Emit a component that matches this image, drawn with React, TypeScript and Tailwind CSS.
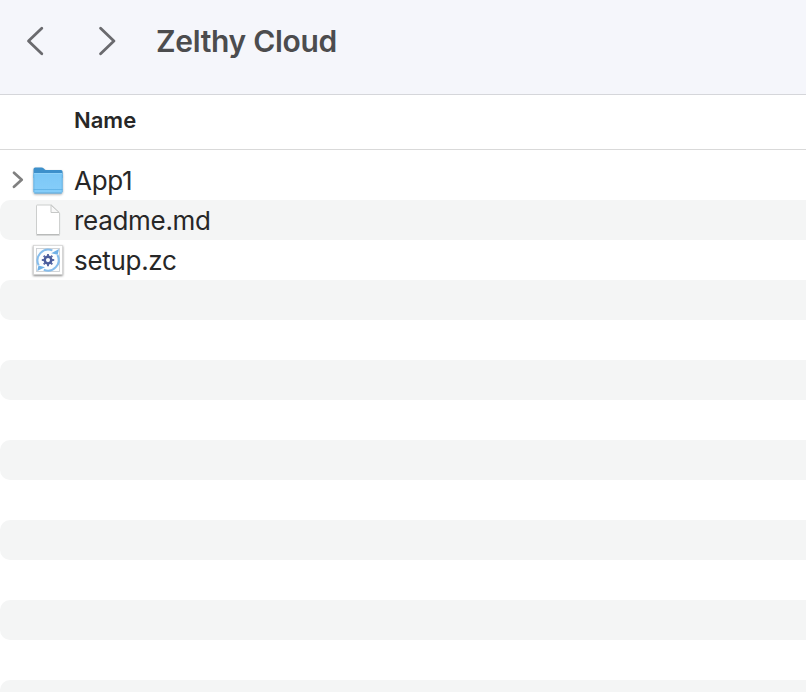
import type { ReactNode } from "react";

function Chevron({ direction }: { direction: "left" | "right" }) {
  return (
    <svg width="18" height="30" viewBox="0 0 18 30" fill="none" stroke="#6a6a6e" strokeWidth="2.8" strokeLinecap="round" strokeLinejoin="round">
      <path d={direction === "left" ? "M15.8 2.2 L2.5 15 L15.8 27.8" : "M1.6 2.2 L14.9 15 L1.6 27.8"} />
    </svg>
  );
}

function FolderIcon() {
  return (
    <svg width="34" height="34" viewBox="0 0 34 34" className="drop-shadow-[0_1px_1px_rgba(0,0,0,0.3)]">
      <defs>
        <linearGradient id="folder" x1="0" y1="0" x2="0" y2="1">
          <stop offset="0" stopColor="#7cc8f7" />
          <stop offset="1" stopColor="#86cdf9" />
        </linearGradient>
      </defs>
      <path d="M2.5 6.2 Q2.5 4.6 4.2 4.6 H10.5 Q11.8 4.6 12.8 5.5 L13.8 6.4 Q14.6 7.1 15.6 7.1 H30 Q31.6 7.1 31.6 8.7 V15 H2.5 Z" fill="#3d90cb" />
      <path d="M2.5 11.3 Q2.5 10 3.8 10 H30.3 Q31.6 10 31.6 11.3 V28.8 Q31.6 30.4 30 30.4 H4.1 Q2.5 30.4 2.5 28.8 Z" fill="url(#folder)" />
      <path d="M3.2 10.5 H31" stroke="#90d2f9" />
      <path d="M2.5 26.5 H31.6" stroke="#60b2e7" strokeWidth="0.9" />
      <path d="M3.3 30 H30.8" stroke="#559fcf" strokeWidth="0.8" />
      <path d="M2.9 11.5 V29 M31.2 11.5 V29" stroke="#5dacdf" strokeWidth="0.7" />
    </svg>
  );
}

function DocumentIcon() {
  return (
    <svg width="34" height="34" viewBox="0 0 34 34" className="drop-shadow-[0_1px_0.5px_rgba(0,0,0,0.12)]">
      <path d="M6 2 H20.5 L28.6 10 V31.1 Q28.6 31.5 28.2 31.5 H6 Q5.5 31.5 5.5 31.1 V2.5 Q5.5 2 6 2 Z" fill="#fff" stroke="#cccecd" />
      <path d="M20 2.2 V9.5 H28.2 Z" fill="#f8f8f8" stroke="#c6c8c7" strokeLinejoin="round" />
      <path d="M6 31.5 H28" stroke="#b9bbba" />
    </svg>
  );
}

function SetupIcon() {
  return (
    <svg width="34" height="34" viewBox="0 0 34 34" fill="none" className="drop-shadow-[0_1px_0.8px_rgba(0,0,0,0.5)]">
      <rect x="2.5" y="2.5" width="29" height="29" fill="#fff" stroke="#d4d4d4" strokeWidth="0.7" />
      <rect x="5.5" y="5.5" width="23" height="23" fill="#fcfdfe" stroke="#cdd0d3" strokeWidth="0.9" />
      <path d="M7.7 22.3 A10.8 10.8 0 0 1 21.4 7.4" stroke="#86bdec" strokeWidth="2.1" />
      <path d="M26.5 11.9 A10.8 10.8 0 0 1 12.8 26.8" stroke="#86bdec" strokeWidth="2.1" />
      <path d="M20.2 10.2 L28 6 L26.7 11.7 Z" fill="#70b0e6" />
      <path d="M14 24.2 L6.2 28 L7.5 22.5 Z" fill="#70b0e6" />
      <g stroke="#5c6ca7" strokeWidth="2">
        <path d="M17 10.9 V13.7 M17 20.5 V23.3 M10.8 17.1 H13.6 M20.4 17.1 H23.2 M12.7 12.8 L14.8 14.9 M19.2 19.3 L21.3 21.4 M21.3 12.8 L19.2 14.9 M14.8 19.3 L12.7 21.4" />
        <circle cx="17" cy="17.1" r="3.3" stroke="#4b5c9c" strokeWidth="2.5" />
      </g>
    </svg>
  );
}

interface FileEntry {
  name: string;
  icon: ReactNode;
  expandable?: boolean;
}

const files: FileEntry[] = [
  { name: "App1", icon: <FolderIcon />, expandable: true },
  { name: "readme.md", icon: <DocumentIcon /> },
  { name: "setup.zc", icon: <SetupIcon /> },
];

const rows: (FileEntry | undefined)[] = Array.from({ length: 14 }, (_, i) => files[i]);

export default function App() {
  return (
    <div className="flex h-[692px] w-[806px] flex-col overflow-hidden bg-white font-['Inter',sans-serif]">
      <header className="flex h-[95px] shrink-0 items-start border-b border-[#d5d6da] bg-[#f5f6fb] pl-[26px] pt-[26px]">
        <nav className="flex gap-[55px]">
          <button aria-label="Back"><Chevron direction="left" /></button>
          <button aria-label="Forward"><Chevron direction="right" /></button>
        </nav>
        <h1 className="ml-[39px] text-[30px] font-semibold leading-[30px] tracking-[-0.3px] text-[#4c4c4e]">Zelthy Cloud</h1>
      </header>
      <div className="flex h-[55px] shrink-0 items-center border-b border-[#d9d9d9] pb-1 pl-[74px] text-[22px] font-semibold text-[#272727]">
        <span>Name</span>
      </div>
      <main className="flex-1 overflow-hidden pt-2.5">
        {rows.map((file, index) => (
          <div key={index} className="flex h-10 items-center rounded-l-[10px] pl-[11px] even:bg-[#f4f5f5]">
            {file && (
              <>
                <span className="flex w-5 shrink-0">
                  {file.expandable && (
                    <svg width="14" height="18" viewBox="0 0 14 18" fill="none" stroke="#808080" strokeWidth="2.7" strokeLinecap="round" strokeLinejoin="round">
                      <path d="M3 1.8 L10.7 8.8 L3 15.8" />
                    </svg>
                  )}
                </span>
                {file.icon}
                <span className="ml-[9px] pt-0.5 text-[26px] leading-8 tracking-[-0.3px] text-[#272727]">{file.name}</span>
              </>
            )}
          </div>
        ))}
      </main>
    </div>
  );
}
